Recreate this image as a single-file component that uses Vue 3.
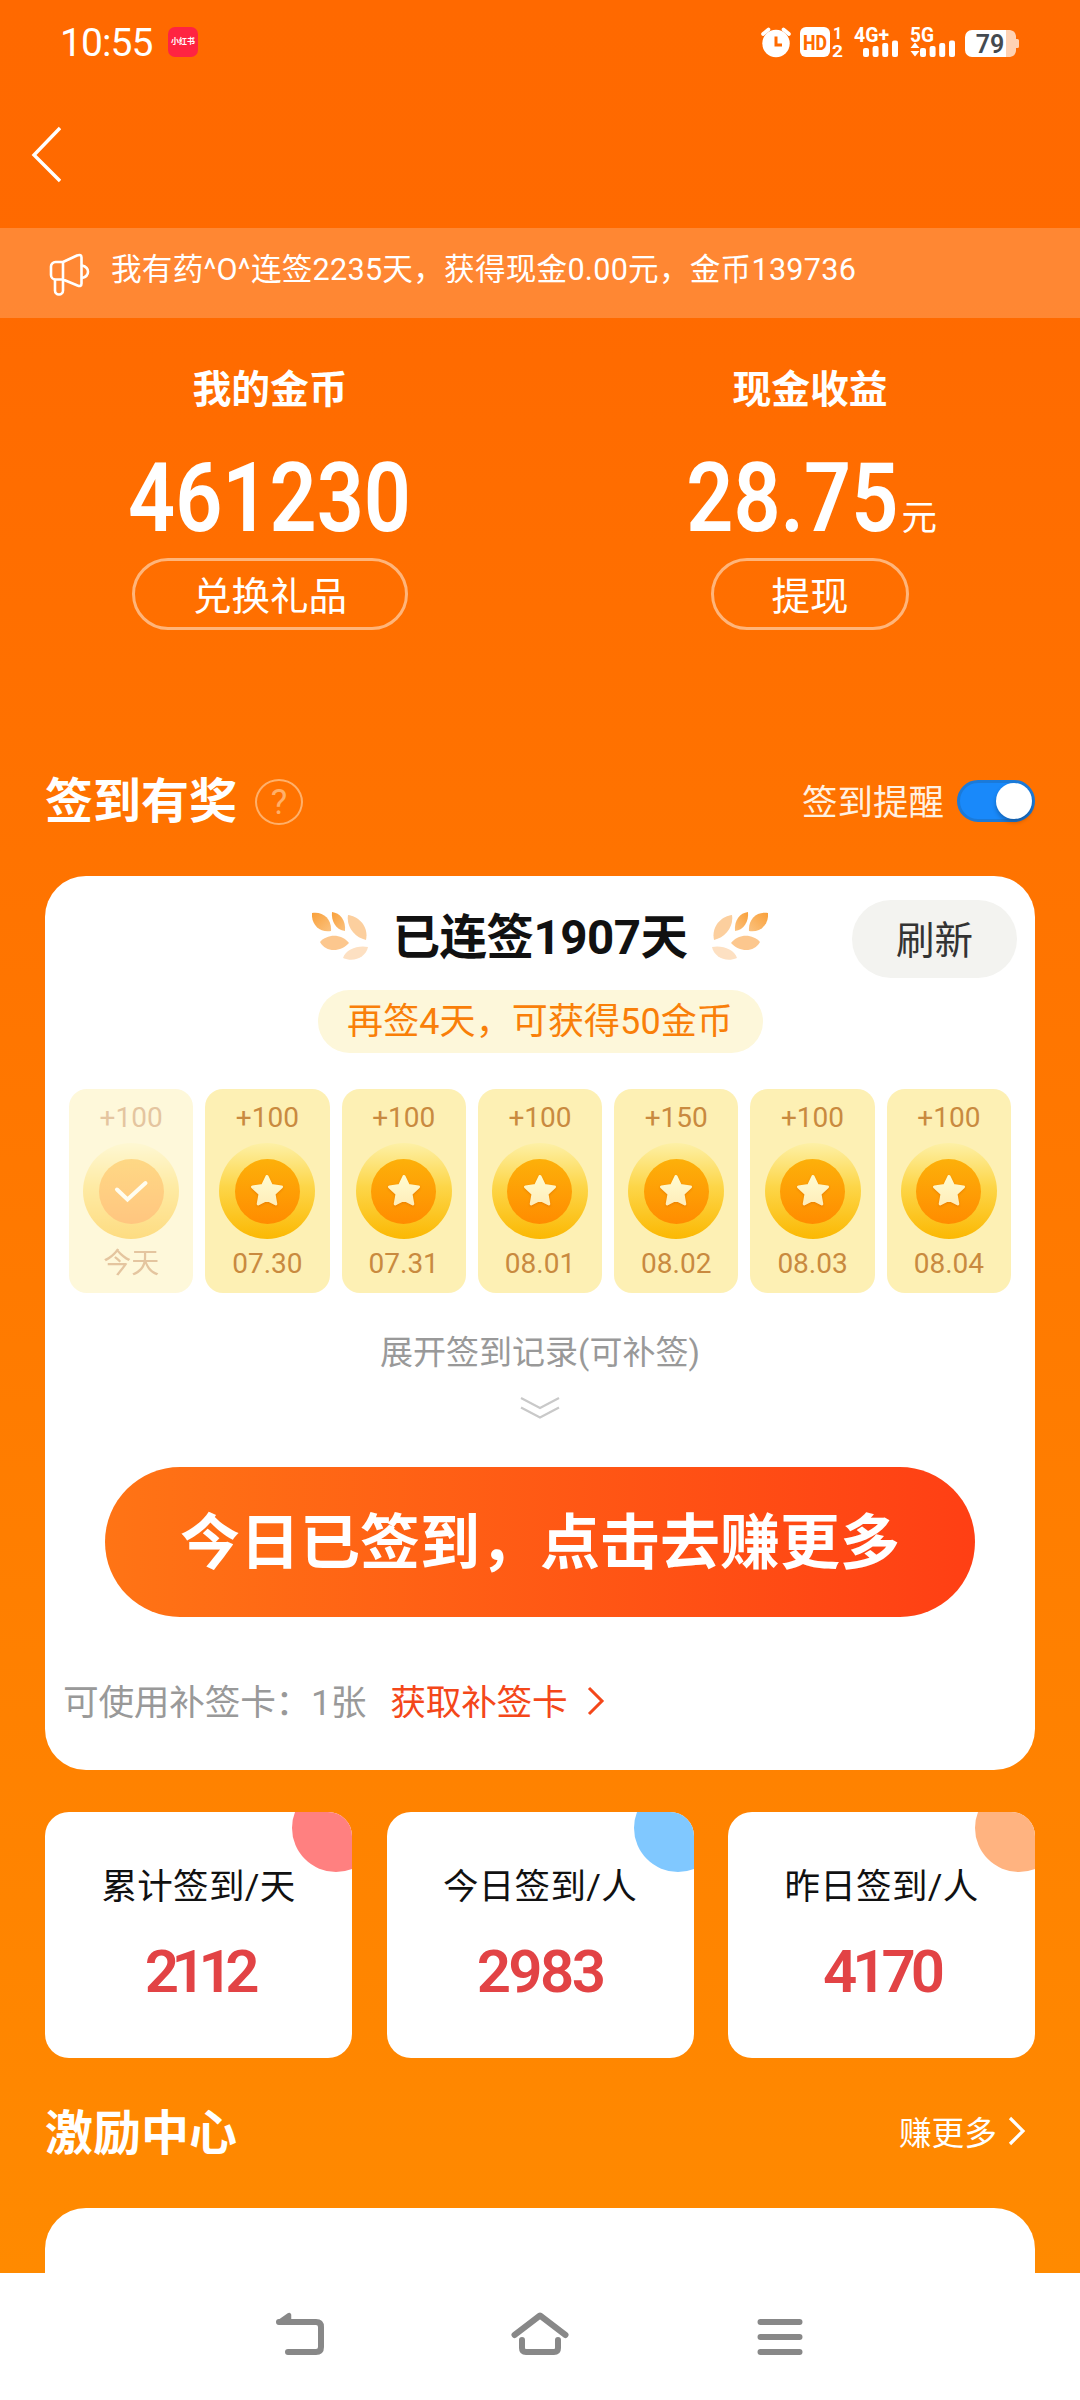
<script setup>
const days = [
  { bonus: '+100', label: '今天', done: true },
  { bonus: '+100', label: '07.30' },
  { bonus: '+100', label: '07.31' },
  { bonus: '+100', label: '08.01' },
  { bonus: '+150', label: '08.02' },
  { bonus: '+100', label: '08.03' },
  { bonus: '+100', label: '08.04' },
]
const stats = [
  { label: '累计签到/天', value: '2112', tone: 'pink' },
  { label: '今日签到/人', value: '2983', tone: 'blue' },
  { label: '昨日签到/人', value: '4170', tone: 'peach' },
]
const tracking = (value) => -2.6 - 2.4 * (value.split('1').length - 1)
const bars = [
  { x: 0, h: 9 },
  { x: 9.6, h: 11 },
  { x: 19.2, h: 14 },
  { x: 29, h: 16.5 },
]
</script>

<template>
  <div class="screen">
    <header class="status">
      <span class="clock">10:55</span>
      <span class="app-badge">小红书</span>
      <svg class="indicators" width="260" height="54" viewBox="761 15 260 54">
        <g fill="#fff">
          <circle cx="777" cy="43.5" r="13.7" />
          <path d="M764 34l5.500-4.500M790 34l-5.500-4.500" stroke="#fff" stroke-width="3.600" stroke-linecap="round" />
          <path d="M777 36.500v8.500h6" fill="none" stroke="#ff6a00" stroke-width="3" />
          <rect x="801" y="27" width="30" height="30" rx="6" />
          <text x="816" y="49.500" font-size="20" font-weight="800" fill="#ff6a00" text-anchor="middle" textLength="24" lengthAdjust="spacingAndGlyphs">HD</text>
          <text x="838.500" y="38.500" font-size="16" font-weight="700" text-anchor="middle">1</text>
          <text x="838.500" y="56.500" font-size="16" font-weight="700" text-anchor="middle" textLength="11" lengthAdjust="spacingAndGlyphs">2</text>
          <text x="855" y="41.500" font-size="20" font-weight="700" textLength="35" lengthAdjust="spacingAndGlyphs">4G+</text>
          <rect v-for="b in bars" :key="b.x" :x="864 + b.x" :y="57 - b.h" width="6" :height="b.h" rx="2" />
          <text x="911" y="41.500" font-size="20" font-weight="700" textLength="24" lengthAdjust="spacingAndGlyphs">5G</text>
          <path d="M911.500 48l4.500-5.500 4.500 5.500zM911.500 51l4.500 5.500 4.500-5.500z" />
          <rect v-for="b in bars" :key="b.x" :x="921 + b.x" :y="57 - b.h" width="6" :height="b.h" rx="2" />
          <path d="M1007 30h4a7 7 0 0 1 6 6v3h1.500a1.500 1.500 0 0 1 1.500 1.500v6a1.500 1.500 0 0 1-1.500 1.500h-1.500v3a7 7 0 0 1-6 6h-4z" opacity=".7" />
          <path d="M1007 30h-34a7 7 0 0 0-7 7v13a7 7 0 0 0 7 7h34z" />
        </g>
        <text x="991" y="53" font-size="25" font-weight="600" fill="#444a50" text-anchor="middle">79</text>
      </svg>
    </header>

    <nav class="topbar">
      <svg width="32" height="58" viewBox="0 0 32 58" fill="none" stroke="#fff" stroke-width="3.400">
        <path d="M31 2L5 29l26 26" />
      </svg>
    </nav>

    <section class="notice">
      <svg width="42" height="44" viewBox="0 0 42 44" fill="none" stroke="#fff" stroke-width="2.600" stroke-linejoin="round" stroke-linecap="round">
        <path d="M14 9H6.500a4.500 4.500 0 0 0-4.500 4.500v8.500a4.500 4.500 0 0 0 4.500 4.500H14zM14 9l14-6.500q4.500-1.500 4.500 2v26q0 3.500-4 2L14 26.500" />
        <path d="M33 12.500c8 2 8 10.500 0 12.500M6 27v10.500a4 4 0 0 0 8 0V27" />
      </svg>
      <span>我有药^O^连签2235天，获得现金0.00元，金币139736</span>
    </section>

    <section class="assets">
      <div class="asset">
        <h3>我的金币</h3>
        <p class="amount"><b class="coins">461230</b></p>
        <button class="ghost wide">兑换礼品</button>
      </div>
      <div class="asset">
        <h3>现金收益</h3>
        <p class="amount"><b class="cash">28.75</b><small>元</small></p>
        <button class="ghost">提现</button>
      </div>
    </section>

    <div class="heading">
      <h2>签到有奖</h2>
      <i class="help">?</i>
      <span class="remind">签到提醒</span>
      <span class="switch"></span>
    </div>

    <section class="card">
      <div class="card-top">
        <svg class="wheat" width="56" height="48" viewBox="0 0 56 48">
          <defs>
            <linearGradient id="leaf" x1="0" y1="0" x2="1" y2="1">
              <stop offset="0" stop-color="#f9a03a" /><stop offset="1" stop-color="#fbc27f" />
            </linearGradient>
          </defs>
          <path d="M0 1C11-1 20 7 19 19C8 21-1 13 0 1z" fill="url(#leaf)" />
          <path d="M20 0C28 1 34 8 33 19C24 18 19 9 20 0z" fill="url(#leaf)" />
          <path d="M36 3C46 4 57 14 54 28C43 26 34 15 36 3z" fill="#fccf9e" />
          <path d="M8 30C15 22 29 21 37 31C29 40 14 41 8 30z" fill="#fcc78e" />
          <path d="M31 46C34 37 46 33 56 35C54 45 42 51 31 46z" fill="#fde0c2" />
        </svg>
        <h1>已连签1907天</h1>
        <svg class="wheat flip" width="56" height="48" viewBox="0 0 56 48">
          <path d="M0 1C11-1 20 7 19 19C8 21-1 13 0 1z" fill="url(#leaf)" />
          <path d="M20 0C28 1 34 8 33 19C24 18 19 9 20 0z" fill="url(#leaf)" />
          <path d="M36 3C46 4 57 14 54 28C43 26 34 15 36 3z" fill="#fccf9e" />
          <path d="M8 30C15 22 29 21 37 31C29 40 14 41 8 30z" fill="#fcc78e" />
          <path d="M31 46C34 37 46 33 56 35C54 45 42 51 31 46z" fill="#fde0c2" />
        </svg>
        <button class="refresh">刷新</button>
      </div>
      <div class="hint">再签4天，可获得50金币</div>

      <ul class="days">
        <li v-for="d in days" :key="d.label" :class="{ done: d.done }">
          <span>{{ d.bonus }}</span>
          <div class="coin">
            <div class="core">
              <svg v-if="d.done" width="36" height="26" viewBox="0 0 36 26" fill="none" stroke="#fffbe0" stroke-width="4" stroke-linecap="round" stroke-linejoin="miter">
                <path d="M4 11.500l10.500 10L32.500 5" />
              </svg>
              <svg v-else class="star" width="36" height="36" viewBox="0 0 36 36">
                <defs>
                  <linearGradient id="star" x1="0" y1="0" x2="0" y2="1">
                    <stop offset="0" stop-color="#fffbd0" /><stop offset="1" stop-color="#ffeebb" />
                  </linearGradient>
                </defs>
                <path d="M18 3.500l4.300 9 10.200 1.400-7.500 7 1.800 10L18 26.500l-8.800 4.400 1.800-10-7.500-7 10.200-1.400z" fill="url(#star)" stroke="url(#star)" stroke-width="3" stroke-linejoin="round" />
              </svg>
            </div>
          </div>
          <span>{{ d.label }}</span>
        </li>
      </ul>

      <div class="expand">
        <span>展开签到记录(可补签)</span>
        <svg width="40" height="24" viewBox="0 0 40 24" fill="none" stroke="#c9c9c9" stroke-width="2.200">
          <path d="M1 2l19 10L39 2M1 11.500l19 10 19-10" />
        </svg>
      </div>

      <button class="primary">今日已签到，点击去赚更多</button>

      <div class="makeup">
        <span>可使用补签卡：1张</span>
        <a>获取补签卡</a>
        <svg width="18" height="30" viewBox="0 0 18 30" fill="none" stroke="#f4471a" stroke-width="3">
          <path d="M2 2l13 13L2 28" />
        </svg>
      </div>
    </section>

    <section class="stats">
      <div v-for="s in stats" :key="s.label" class="stat" :class="s.tone">
        <span>{{ s.label }}</span>
        <b :style="{ letterSpacing: tracking(s.value) + 'px' }">{{ s.value }}</b>
      </div>
    </section>

    <div class="heading second">
      <h2>激励中心</h2>
      <span class="more">赚更多</span>
      <svg width="18" height="30" viewBox="0 0 18 30" fill="none" stroke="#fff" stroke-width="3.200">
        <path d="M2 2l13 13L2 28" />
      </svg>
    </div>
    <section class="card peek"></section>

    <footer class="sysnav">
      <svg width="50" height="46" viewBox="0 0 50 46" fill="none" stroke="#888" stroke-width="6" stroke-linecap="round" stroke-linejoin="round">
        <path d="M4 11h37q5 0 5 5v20q0 5-5 5H13" /><path d="M4 11l10-7v5z" stroke-width="4.500" />
      </svg>
      <svg class="home" width="60" height="46" viewBox="0 0 60 46" fill="none" stroke="#888" stroke-width="6" stroke-linecap="round" stroke-linejoin="round">
        <path d="M4.500 24L30 4.500l25.500 19.500" /><path d="M12 29v8q0 4 4 4h28q4 0 4-4v-8" />
      </svg>
      <svg width="46" height="46" viewBox="0 0 46 46" stroke="#888" stroke-width="6" stroke-linecap="round">
        <path d="M3.500 11h39M3.500 26h39M3.500 41h39" />
      </svg>
    </footer>
  </div>
</template>

<style>
body {
  background: #fff;
}
</style>

<style scoped>
* {
  box-sizing: border-box;
  margin: 0;
  padding: 0;
}
.screen {
  width: 1080px;
  height: 2400px;
  overflow: hidden;
  display: flex;
  flex-direction: column;
  background: linear-gradient(180deg, #ff6900 0, #ff6a00 300px, #ff8a00 2272px);
  color: #fff;
  font-family: Roboto, "Noto Sans CJK SC", sans-serif;
}
.screen > * {
  flex: none;
}
svg {
  display: block;
  flex: none;
}
button {
  border: 0;
  color: inherit;
  font-family: inherit;
}
.status {
  display: flex;
  align-items: center;
  height: 84px;
  padding: 0 60px 0 60px;
}
.clock {
  width: 108px;
  padding-top: 2px;
  font-size: 39px;
  letter-spacing: -0.9px;
}
.app-badge {
  width: 30px;
  height: 30px;
  border-radius: 7px;
  background: #ff2442;
  font-size: 8px;
  font-weight: 700;
  line-height: 29px;
  text-align: center;
}
.indicators {
  margin-left: auto;
}
.topbar {
  height: 144px;
  padding: 42px 0 0 29px;
}
.notice {
  height: 90px;
  padding: 0 0 12px 49px;
  display: flex;
  align-items: center;
  background: rgba(255, 255, 255, 0.2);
  font-size: 30.6px;
  letter-spacing: 0.25px;
  white-space: nowrap;
}
.notice svg {
  margin: 15px 20px 0 0;
}
.assets {
  display: flex;
  height: 440px;
}
.asset {
  width: 540px;
  padding-top: 46px;
  display: flex;
  flex-direction: column;
  align-items: center;
}
.asset h3 {
  font-size: 38.8px;
  line-height: 52px;
}
.amount {
  height: 142px;
  display: flex;
  justify-content: center;
  align-items: flex-end;
  padding-bottom: 22px;
  line-height: 76px;
}
.amount b {
  font-size: 96px;
  font-weight: 600;
  transform: scaleX(0.86);
}
.coins {
  margin: 0 -25px;
}
.cash {
  margin: 0 -14px 0 -14px;
}
.amount small {
  font-size: 35.5px;
  line-height: 36px;
}
.ghost {
  width: 198px;
  height: 72px;
  border: 3px solid #ffb57a;
  border-radius: 36px;
  background: none;
  font-size: 38.5px;
  line-height: 71px;
  display: flex;
  justify-content: center;
}
.ghost.wide {
  width: 276px;
}
.heading {
  height: 118px;
  padding: 0 45px 36px;
  display: flex;
  align-items: center;
}
.heading h2 {
  padding-top: 5px;
  font-size: 48px;
  line-height: 70px;
}
.help {
  width: 48px;
  height: 46px;
  margin: 6px 0 0 18px;
  border: 2px solid #ffb06a;
  border-radius: 50%;
  color: #ffb06a;
  font-size: 35px;
  font-style: normal;
  line-height: 43px;
  text-align: center;
}
.remind {
  margin-left: auto;
  font-size: 35.5px;
  color: #fff1e2;
}
.switch {
  width: 78px;
  height: 42px;
  margin-left: 13px;
  margin-top: 4px;
  border: 3px solid #1b7ad9;
  border-radius: 21px;
  background: #1989fa;
  display: flex;
  justify-content: flex-end;
  align-items: center;
}
.switch::after {
  content: "";
  width: 36px;
  height: 36px;
  border-radius: 50%;
  background: #fff;
  box-shadow: 0 3px 4px rgba(0, 0, 0, 0.25);
}
.card {
  width: 990px;
  height: 894px;
  margin: 0 45px;
  border-radius: 41px;
  background: #fff;
  color: #111;
}
.card-top {
  height: 102px;
  padding: 24px 18px 0 267px;
  display: flex;
  align-items: flex-start;
}
.wheat {
  margin-top: 12px;
}
.flip {
  transform: scaleX(-1);
}
.card-top h1 {
  width: 344px;
  font-size: 47.5px;
  line-height: 77px;
  text-align: center;
  white-space: nowrap;
  letter-spacing: -0.5px;
}
.refresh {
  width: 165px;
  height: 78px;
  margin-left: auto;
  padding-bottom: 5px;
  border-radius: 39px;
  background: #f3f3f0;
  color: #333;
  font-size: 38.5px;
}
.hint {
  width: 445px;
  height: 63px;
  margin: 12px auto 36px;
  border-radius: 32px;
  background: #fdf7da;
  color: #f97f09;
  font-size: 36px;
  line-height: 64px;
  text-align: center;
  white-space: nowrap;
  letter-spacing: 0.1px;
}
.days {
  display: flex;
  gap: 12px;
  padding: 0 24px;
  list-style: none;
}
.days li {
  flex: 1;
  height: 204px;
  border-radius: 18px;
  background: #fdf0b4;
  color: #c98a3f;
  font-size: 28px;
  line-height: 58px;
  display: flex;
  flex-direction: column;
  align-items: center;
}
.days li.done {
  opacity: 0.5;
}
.coin {
  width: 96px;
  height: 96px;
  margin: -4px 0 -4px;
  border-radius: 50%;
  background: linear-gradient(180deg, #fdf0a6 0, #fdd649 45%, #fbb803 100%);
  display: flex;
  align-items: center;
  justify-content: center;
}
.core {
  width: 65px;
  height: 65px;
  border-radius: 50%;
  background: linear-gradient(180deg, #fdb00a, #ff8c00);
  display: flex;
  align-items: center;
  justify-content: center;
}
.star {
  filter: drop-shadow(0 1px 1px rgba(220, 110, 0, 0.6));
}
.expand {
  height: 174px;
  padding-top: 37px;
  display: flex;
  flex-direction: column;
  align-items: center;
  color: #999;
  font-size: 33px;
  line-height: 46px;
}
.expand svg {
  margin-top: 20px;
}
.primary {
  display: block;
  width: 870px;
  height: 150px;
  margin: 0 auto;
  padding-bottom: 10px;
  border-radius: 75px;
  background: linear-gradient(90deg, #ff7415, #ff3f14);
  color: #fff;
  font-size: 60px;
  font-weight: 700;
}
.makeup {
  height: 153px;
  padding: 14px 0 0 18px;
  display: flex;
  align-items: center;
  color: #999;
  font-size: 35.7px;
  letter-spacing: -0.25px;
}
.makeup span,
.makeup a {
  padding-bottom: 2px;
}
.makeup a {
  margin: 0 19px 0 24px;
  color: #f4471a;
}
.stats {
  display: flex;
  justify-content: space-between;
  padding: 42px 45px 0;
}
.stat {
  position: relative;
  overflow: hidden;
  width: 307px;
  height: 246px;
  border-radius: 24px;
  background: #fff;
  color: #111;
  display: flex;
  flex-direction: column;
  align-items: center;
}
.stat::before {
  content: "";
  position: absolute;
  left: 247px;
  top: -28px;
  width: 88px;
  height: 88px;
  border-radius: 50%;
  background: var(--tone);
}
.pink {
  --tone: #ff8080;
}
.blue {
  --tone: #80c8ff;
}
.peach {
  --tone: #ffb380;
}
.stat span {
  margin-top: 49px;
  font-size: 35.5px;
  line-height: 52px;
  letter-spacing: 0.3px;
}
.stat b {
  margin-top: 24px;
  color: #e24345;
  font-size: 60px;
  font-weight: 600;
  line-height: 70px;
}
.second {
  height: 150px;
  padding-bottom: 4px;
}
.more {
  margin: 0 11px 0 auto;
  padding-bottom: 1px;
  font-size: 32.7px;
}
.second svg {
  margin-right: 9px;
}
.peek {
  height: 65px;
  border-radius: 41px 41px 0 0;
}
.sysnav {
  height: 127px;
  padding: 38px 277px 0 275px;
  background: #fff;
  display: flex;
  justify-content: space-between;
}
.home {
  margin-left: -3px;
}
</style>
